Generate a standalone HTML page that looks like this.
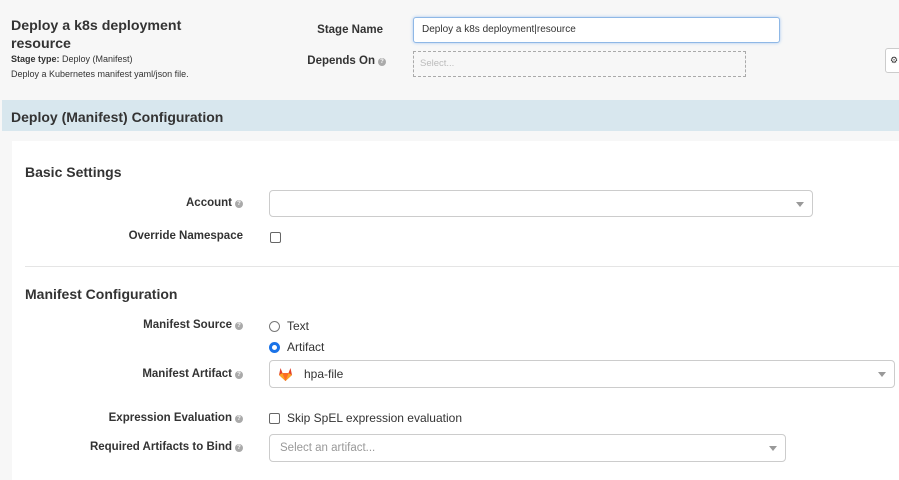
<!DOCTYPE html>
<html><head><style>
*{box-sizing:border-box;margin:0;padding:0}
body{width:899px;height:480px;overflow:hidden;background:#f7f7f7;font-family:"Liberation Sans",sans-serif;color:#333;position:relative;font-size:12px}
.a{position:absolute}
.lbl{position:absolute;font-weight:bold;font-size:11.5px;color:#333;text-align:right;white-space:nowrap}
.q{display:inline-block;width:8px;height:8px;border-radius:50%;background:#aaa;color:#fff;font-size:6px;line-height:8px;text-align:center;vertical-align:1px;margin-left:3px}
.sel{position:absolute;background:#fff;border:1px solid #ccc;border-radius:4px}
.car{position:absolute;right:8px;top:50%;margin-top:-2px;border-left:4px solid transparent;border-right:4px solid transparent;border-top:5px solid #999}
.cb{position:absolute;width:11px;height:11px;border:1px solid #666;border-radius:2px;background:#fff}
</style></head><body>
<div class="a" style="left:11px;top:17px;font-size:14.2px;font-weight:bold;line-height:18px;color:#333">Deploy a k8s deployment<br>resource</div>
<div class="a" style="left:11px;top:54px;font-size:9px"><b>Stage type:</b> Deploy (Manifest)</div>
<div class="a" style="left:11px;top:69px;font-size:9px">Deploy a Kubernetes manifest yaml/json file.</div>
<div class="lbl" style="right:516px;top:24px">Stage Name</div>
<div class="lbl" style="right:513px;top:55px">Depends On<span class="q">?</span></div>
<div class="a" style="left:413px;top:17px;width:367px;height:26px;background:#fff;border:1px solid #8fb8e6;border-radius:3px;box-shadow:0 0 3px #a8c8ef;font-size:10px;padding:6px 8px">Deploy a k8s deployment|resource</div>
<div class="a" style="left:413px;top:51px;width:333px;height:26px;border:1px dashed #aaa;font-size:9.5px;color:#bbb;padding:6px 6px">Select...</div>
<div class="a" style="left:885px;top:48px;width:20px;height:25px;border:1px solid #ccc;border-radius:3px;background:#fff;font-size:9px;padding:6px 4px">⚙</div>
<div class="a" style="left:2px;top:100px;width:897px;height:31px;background:#d8e7ee"></div>
<div class="a" style="left:11px;top:109px;font-size:14px;font-weight:bold;color:#333">Deploy (Manifest) Configuration</div>
<div class="a" style="left:12px;top:141px;width:887px;height:339px;background:#fff"></div>
<div class="a" style="left:25px;top:164px;font-size:14px;font-weight:bold">Basic Settings</div>
<div class="lbl" style="right:656px;top:197px">Account<span class="q">?</span></div>
<div class="sel" style="left:269px;top:190px;width:544px;height:27px"><div class="car"></div></div>
<div class="lbl" style="right:656px;top:230px">Override Namespace</div>
<div class="cb" style="left:270px;top:232px"></div>
<div class="a" style="left:25px;top:266px;width:874px;height:1px;background:#e5e5e5"></div>
<div class="a" style="left:25px;top:286px;font-size:14px;font-weight:bold">Manifest Configuration</div>
<div class="lbl" style="right:656px;top:319px">Manifest Source<span class="q">?</span></div>
<div class="a" style="left:269px;top:321px;width:11px;height:11px;border:1px solid #777;border-radius:50%;background:#fff"></div>
<div class="a" style="left:287px;top:319px;font-size:12px">Text</div>
<div class="a" style="left:269px;top:342px;width:11px;height:11px;border-radius:50%;background:#fff;border:3px solid #1a73e8"></div>
<div class="a" style="left:287px;top:340px;font-size:12px">Artifact</div>
<div class="lbl" style="right:656px;top:368px">Manifest Artifact<span class="q">?</span></div>
<div class="sel" style="left:269px;top:360px;width:626px;height:28px"><svg class="a" style="left:8px;top:6px" width="15" height="14" viewBox="0 0 15 14"><path d="M7.5 14 L1 8 L2.5 1 L4.5 6 H10.5 L12.5 1 L14 8 Z" fill="#e24329"/><path d="M7.5 14 L4.5 6 H10.5Z" fill="#fc6d26"/><path d="M1 8 L4.5 6 L7.5 14Z M14 8 L10.5 6 L7.5 14Z" fill="#fca326"/></svg><div class="a" style="left:34px;top:6px;font-size:12px">hpa-file</div><div class="car"></div></div>
<div class="lbl" style="right:656px;top:412px">Expression Evaluation<span class="q">?</span></div>
<div class="cb" style="left:269px;top:413px"></div>
<div class="a" style="left:287px;top:411px;font-size:12px">Skip SpEL expression evaluation</div>
<div class="lbl" style="right:656px;top:441px">Required Artifacts to Bind<span class="q">?</span></div>
<div class="sel" style="left:269px;top:434px;width:517px;height:28px"><div class="a" style="left:10px;top:7px;font-size:11.5px;color:#999">Select an artifact...</div><div class="car"></div></div>
</body></html>
